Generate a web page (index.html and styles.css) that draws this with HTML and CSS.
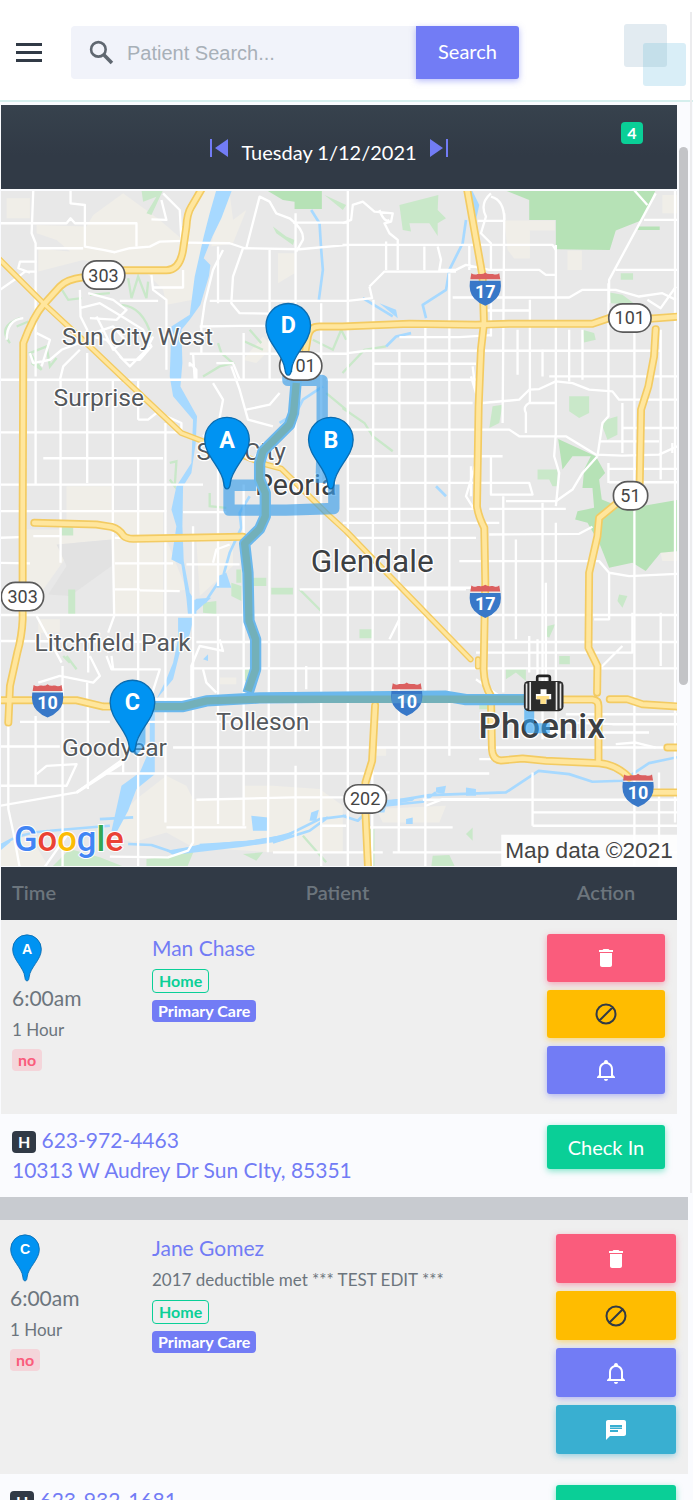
FILE: index.html
```html
<!DOCTYPE html>
<html lang="en">
<head>
  <meta charset="UTF-8">
  <meta name="viewport" content="width=device-width, initial-scale=1.0">
  <title>Patient Schedule</title>
  <link rel="stylesheet" href="styles.css">
</head>
<body>
  <!-- shared shapes -->
  <svg class="defs" width="0" height="0" aria-hidden="true">
    <symbol id="pin" viewBox="-70 -70 140 222" overflow="visible">
      <path d="M0 148C-7 148-9 140-10 130C-14 85-67 50-67 0A67 67 0 0 1 67 0C67 50 14 85 10 130C9 140 7 148 0 148Z" fill="#0093f2" stroke="#0a6cb0" stroke-width="4"/>
    </symbol>
    <symbol id="shield" viewBox="0 0 94 104" overflow="visible">
      <path d="M5 2Q15 9 24 4L30 4Q40 6 47 0Q54 6 64 4L70 4Q80 9 89 2L92 20H2Z" fill="#db5f5f"/>
      <path d="M1 25H93Q98 60 80 78Q66 93 47 100Q28 93 14 78Q-4 60 1 25Z" fill="#3878c8"/>
    </symbol>
    <symbol id="trash" viewBox="0 0 24 24"><path d="M6 19c0 1.100.9 2 2 2h8c1.100 0 2-.9 2-2V7H6v12z" fill="#fff"/><path d="M19 4h-3.500l-1-1h-5l-1 1H5v2h14V4z" fill="#fff"/></symbol>
    <symbol id="ban" viewBox="0 0 24 24"><path d="M12 2.500a9.500 9.500 0 1 0 0 19a9.500 9.500 0 0 0 0-19ZM5.500 18.500L18.500 5.500" fill="none" stroke="#313a46" stroke-width="2"/></symbol>
    <symbol id="bell" viewBox="0 0 24 24"><path d="M10 21h4c0 1.100-.9 2-2 2s-2-.9-2-2zM21 19v1H3v-1l2-2v-6c0-3.100 2.030-5.830 5-6.710V4a2 2 0 0 1 4 0v.29c2.970.88 5 3.610 5 6.710v6l2 2zm-4-8a5 5 0 0 0-10 0v7h10v-7z" fill="#fff"/></symbol>
    <symbol id="message" viewBox="0 0 24 24"><path d="M20 2H4c-1.100 0-2 .9-2 2v18l4-4h14c1.100 0 2-.9 2-2V4c0-1.100-.9-2-2-2zM6 7h12v2H6V7zm8 7H6v-2h8v2zm4-3H6V9.500h12V11z" fill="#fff" fill-rule="evenodd"/></symbol>
  </svg>

  <header class="topbar">
    <button class="menu" type="button" aria-label="Menu"><span></span><span></span><span></span></button>
    <form class="search">
      <svg class="search-icon" viewBox="0 0 24 24" aria-hidden="true"><circle cx="9" cy="9" r="7" fill="none" stroke="#5f6770" stroke-width="2.500"/><path d="M14 14l8 8" stroke="#5f6770" stroke-width="3.500"/></svg>
      <input type="text" id="patientSearch" aria-label="Patient Search" placeholder="Patient Search...">
      <button type="submit">Search</button>
    </form>
    <svg class="brand" viewBox="0 0 62 62" aria-hidden="true">
      <rect width="43" height="43" rx="3" fill="#e2ebf1"/>
      <rect x="19" y="19" width="43" height="43" rx="3" fill="#d9eef7"/>
      <path d="M22 19H43V40a3 3 0 0 1-3 3H19V22a3 3 0 0 1 3-3Z" fill="#c4dfea"/>
    </svg>
  </header>

  <main>
    <section class="card">
      <div class="datebar">
        <div class="datenav">
          <button type="button" aria-label="Previous day"><svg viewBox="0 0 18 18"><path d="M0 0h2v18H0zM18 0v18L5 9z" fill="#727cf5"/></svg></button>
          <span>Tuesday 1/12/2021</span>
          <button type="button" aria-label="Next day"><svg viewBox="0 0 18 18"><path d="M16 0h2v18h-2zM0 0v18l13-9z" fill="#727cf5"/></svg></button>
        </div>
        <span class="badge green count">4</span>
      </div>

      <svg class="map" viewBox="3 3 2031 2028" role="img" aria-label="Route map">
        <rect width="2040" height="2040" fill="#e8e8e8"/>
        <!-- open land -->
        <g fill="#f0eee8">
          <path d="M20 25H90V85H20ZM110 105L260 110L280 75L370 10L480 90L550 150L590 0H655L580 330L500 345L490 300L430 240L250 210L115 245V170L160 180L210 185L170 150L110 130Z"/>
          <path d="M635 170L700 160L740 60L700 90L690 10L640 140ZM835 190H885V250L835 280ZM730 510L790 440L820 470L770 520Z"/>
          <path d="M200 890H335V965H490V1280L345 1275L340 1050L230 1060L130 1200L75 1200V1020H200ZM500 1050L560 1200L500 1210ZM590 1050H700V1130L600 1220ZM115 1290H180V1330H115Z"/>
          <path d="M500 1760L560 1790L580 1830H730V1790H820L960 1800L1030 1850V1990L820 1990L580 1975L500 1930L400 1960L330 1940L370 1870L410 1830ZM0 1960L90 1940L150 2040H0Z"/>
          <path d="M1515 92H1667V122H1592V206H1545L1525 180ZM1705 182H1748V240H1705ZM1990 15H2040V70H1990ZM1980 1070H2040V1115H1990Z"/>
          <path d="M1130 1860L1340 1850L1320 1900H1150ZM660 1465H710V1485H660ZM1120 1675H1160V1700H1130Z"/>
        </g>
        <path d="M170 1065L335 1050V1130L210 1220L145 1215L200 1130Z" fill="#e2e2e2"/>
        <!-- parks -->
        <g fill="#b6e2b6">
          <path d="M885 0H967V57H885V35L850 30L800 0ZM1590 0H1970L1930 90L1850 122L1832 180L1670 178V90H1590V30L1515 0ZM1920 110H1982V120H1915Z"/>
          <path d="M1677 748L1790 800L1818 850L1800 870L1808 930L1845 945L1900 955L2040 930V1085L1985 1090L1940 1145L1900 1120L1830 1135L1800 1060L1765 1000L1728 990L1735 965L1785 955L1780 895L1750 895L1755 840L1775 800L1720 800L1690 840Z"/>
        </g>
        <g fill="#c9e8c9">
          <path d="M425 0H490L455 75L440 70L470 20L430 35ZM820 110L860 140L885 150L880 165L830 130ZM975 15L1040 45L1030 60ZM1200 45L1317 15L1315 60L1340 85L1315 100V138L1290 100H1230L1235 125L1210 120Z"/>
          <path d="M1865 250H1902V270H1865ZM1832 308L1870 315L1910 345L1835 340ZM1750 420L1785 430L1790 450L1755 458ZM1480 650L1510 645L1500 700L1470 715ZM1710 620H1770V670L1740 685L1710 665ZM1820 690L1855 680V735L1825 750L1810 710ZM1615 840H1675V890H1660L1650 870H1615Z"/>
          <path d="M185 1010H220V1038H185ZM205 1200H226V1275H205ZM710 1140H725V1180H710ZM695 1180L725 1190V1235L695 1220ZM760 1165H800V1190H760ZM815 1195H880V1215H815ZM610 1240L650 1235V1275L610 1270ZM735 1440H755V1475H735Z"/>
          <path d="M1080 1320H1118V1347H1080ZM1860 1215L1885 1220L1870 1255L1855 1235ZM1645 1310L1668 1305L1650 1345L1640 1340ZM1520 1440L1580 1440V1475L1550 1450L1520 1470ZM1680 1400H1712V1425H1680ZM1440 1540H1475V1560H1440ZM150 2040L210 1980L300 2005L390 2040ZM440 2010L520 2000L585 1980L560 2040H440ZM1110 1920H1125V2040H1112ZM1400 1935L1420 1915V1955ZM1300 2000L1350 1998L1370 2040H1295ZM730 1995L790 1990L770 2015Z"/>
        </g>
        <g fill="none" stroke="#c9e8c9" stroke-width="7">
          <path d="M30 460Q-10 410 60 385M50 410L85 395M95 520L125 540L90 490L140 470L150 530L170 505M180 290L205 330L245 325M270 315L330 310M385 265L395 325L415 260L440 325L445 275M365 345Q430 350 455 440M735 455L790 480M750 420L785 460M940 450L1000 480L1025 420L1040 450M610 560L660 530L700 520L665 490L655 460M980 610L1040 660M1029 550L1095 480L1160 470M1029 655L1095 700L1120 740L1180 785M510 820L530 815L525 890L510 870M630 910V950L680 955M200 1400L230 1440M190 1400L210 1420M910 1940L980 2020M900 1200L965 1265"/>
        </g>
        <!-- water -->
        <g fill="#a7d9ff">
          <path d="M650 0H697L665 85L638 140L612 205L632 225L628 258L602 345L570 390L545 420L548 520L542 590L592 680L588 760L575 850L550 890L548 1010L552 1115L570 1210L590 1240L565 1278L560 1225L545 1125L515 1110L530 1010L515 960L530 890L575 820L580 690L520 620L510 560L515 410L570 375L585 260L612 140L630 70Z"/>
          <path d="M565 1250L590 1228L635 1225L590 1265V1280H565ZM535 1285H582L570 1335L540 1390L520 1470L470 1530L500 1470L520 1420L535 1350ZM450 1545H465V1755L410 1800L385 1865L350 1930L335 1925L365 1790L420 1750L450 1680ZM655 1160L680 1150L695 1195L650 1195ZM755 1880L805 1885V1925H760ZM935 1870L958 1862L950 1895H930ZM610 1410L625 1395V1415ZM1390 0H1418L1440 45L1430 90L1415 30ZM1140 340L1190 360L1195 385ZM1310 1795L1340 1790L1335 1815L1310 1810ZM1400 1795L1430 1800V1820H1400ZM1220 1890L1240 1885V1905H1220Z"/>
        </g>
        <g fill="none" stroke="#a7d9ff" stroke-width="8" stroke-linejoin="round">
          <path d="M615 1240L655 1180M672 1155L690 1090L725 1015L720 970L750 920M935 60L960 100L965 180L970 240L958 330M970 590L910 630L890 670L840 700M1400 90L1390 160L1350 240L1340 300L1270 345L1280 385M1235 430L1190 440L1160 470M1090 325L1180 380M1310 890L1340 920"/>
          <path d="M0 1970Q60 1930 150 1925L330 1910M300 1890L400 1885M0 1980L30 1955M385 1965L455 1968L520 1990L600 1970L680 1972M600 1968L740 1960L860 1940L960 1890L1040 1880M820 1960L930 1925L985 1885M1160 1840L1290 1818L1520 1810L1618 1745L1710 1755L1780 1778L1870 1775L1950 1722L2040 1703M1150 1850L1270 1838L1310 1810M1029 1880L1075 1895L1090 1880"/>
        </g>
        <path d="M500 1985Q640 1960 740 1955Q820 1950 900 1920L850 1955L720 1975L520 1998ZM1130 1835L1250 1825L1240 1835L1160 1850L1155 1870H1130Z" fill="#a7d9ff"/>
        <!-- local streets -->
        <g fill="none" stroke="#fff" stroke-width="7" stroke-linejoin="round">
          <path d="M100 0L95 130L107 160V560M107 570V885M182 570V1120M262 490V880M262 1480V1530M339 570V1050L343 1280L325 1330M415 570V690M415 805V2040M497 700V1900M580 1010V1960L565 1985L505 2005L330 2003M655 170V340M655 730V1190M655 1275V1905M732 430V570M732 885V1910M810 180V570M810 1070L805 1990M888 70V1675M888 1730V2040M965 340V2040"/>
          <path d="M1045 0V2040M1122 330L1118 2040M1200 480L1198 1990M1278 400V2040M1350 250V1700M1515 70L1510 700M1512 920V1510M1592 330V640M1630 940V1650M1670 165V730L1665 800L1680 850L1670 950M1670 1000V1600M1750 420V570M1828 280V680L1810 700L1795 800M1828 820V880M1906 430V2040M1985 420V870M1985 1270V1430M2028 0V1900M25 1550V1860L40 1930L60 2040M107 1580V1790M188 1430V2040M264 1550V1800"/>
          <path d="M0 100H200L212 85L225 100H410V170M0 570H860M980 570H1430M0 728H540M130 806H490M0 885H610M0 965H500M550 968H680M0 1045L60 1043M100 1040H180M0 1120L90 1122M345 1045H700M345 1122H520M560 1125H720M345 1200H420M420 1203L540 1205M0 1277H2040M0 1355L530 1358M590 1358H2040M580 1437H2040M60 1598L330 1598M440 1598H1460M0 1672H180M520 1675H2040M320 1753H1470M590 1832L880 1825H1140M1270 1832H2040M500 1915H740M1110 1915H1360M1600 1910H2040M820 1990H1150M965 1910H1040M1180 1990H2040"/>
          <path d="M560 158L690 160L735 175L900 178L1045 165M1029 165H1660L1670 180M880 98H1045M740 175L780 20L810 35L830 70L870 85Q915 120 910 150L890 185M630 333H1045M600 410L720 408H860M570 492H1045M730 175L700 260L695 340L720 370L860 372M670 180L640 240L615 340L605 410V492M1045 490L1100 483H1985M1120 522H1430M1200 442H1380L1475 436M1045 640H1420M1450 640L1560 630L1590 600L1620 598L1670 575L1720 580L1770 600L1840 605L1860 630H2040M1045 720H1530L1560 740H1700L1790 795L1870 798L1980 795L2040 768M1045 800H1510M1045 880H1590L1600 915H1475V800M1520 935H1670L1720 900L1750 850L1795 800M1045 958H1430M1470 958H1700M1030 1000H1500M1470 1035L1740 1033L1780 1012M1380 1115H1800L1830 1150L1890 1160L2040 1153M1045 1045H1430M1045 1195H1500M900 1200H1400"/>
          <path d="M0 300L50 265L75 245H110M110 215H60L55 235L90 248M105 175H250M212 0V40L255 45V170L310 180L345 187L390 175L450 170L480 155L550 153M485 30L500 90L455 88M490 10L540 60L545 150M455 255L460 300L500 330V540M360 333L475 333M460 293H550V240M240 300L242 380L262 420L255 470M240 355L300 340L375 385L430 420L455 470L420 510H370L320 450L275 440M270 385L350 390L380 360L340 330L265 310M20 450Q20 390 70 385M90 490L100 520L150 510L185 480L250 455M110 430L150 450L125 530M240 480L190 530L180 570M280 430L340 410L375 450L340 480L290 380M360 500L390 530L440 480L460 440"/>
          <path d="M720 570L700 520L650 520M695 530L720 600L745 690L820 710M740 660L810 645L840 610M640 580L670 630L655 710L610 740M580 490L585 570M370 575L500 680L545 700V730M415 690H445L470 670M570 530V520L590 540V570M1029 100L1055 90L1060 45L1090 35L1125 65L1180 70L1175 95L1155 100L1170 130L1195 150V240M1160 155V240M1140 60Q1155 100 1170 90M1275 170V240M1315 170L1325 210L1320 240L1370 240L1400 225L1470 240H1620L1640 255H1670M1110 290L1155 245H1370M1110 290L1118 325L1045 333M1360 323H1710L1750 300L1850 300L1920 320L1990 310L2031 330M1410 165V240M1435 93H1515M1475 20Q1515 30 1515 90M1475 10Q1440 40 1460 80L1445 130L1475 160V240M1460 362H1590M1475 330V440M1555 420V555M1630 480V560M1710 420V575M1650 560H2040M1590 640H1670M1590 640Q1570 650 1580 670V730"/>
          <path d="M1970 10L1830 270V340M1905 0L1945 45M1935 90H2040M1850 240H2040M1945 330L1985 355L2031 290M1420 530L1430 610L1415 560M1430 820L1400 920L1425 960M1415 830V920M1870 640V790M1870 715H2040M1800 755H1980M1830 838H2040M1830 878H2040M2020 760V790M1830 1150V1290H1785M1430 1390H1900V1270M1710 1600L1840 1605H2040M1700 1575H2040M1850 1665L1910 1660L1970 1675M1640 1630H1950M1590 1340V1450M1615 1350V1480M1640 1180V1480M1550 1050V1350M1430 1470L1500 1520M1170 1350L1200 1290M1600 1870H2040M1600 1750V1910M1980 1750V2040M1280 1850L1330 1830H1470M1170 1810H1130M920 1430V1500M610 1440L620 1480L650 1510M575 1520V1430L600 1370L670 1385L660 1350M640 1120L650 1080L690 1065M320 1400L335 1440H480L455 1520M270 1400L300 1460L280 1480L180 1460L115 1480M325 1390V1340M265 1380V1450M110 1280L185 1420M110 1755L140 1730L230 1725L200 1790H0M0 1850L230 1810L370 1710V1750M130 2040L200 1940M335 1400L340 1440M1440 1710H1475M1870 1370L1800 1440"/>
        </g>
        <path d="M370 1720L230 1810M465 1530H720" stroke="#fff" stroke-width="9" fill="none"/>

        <!-- highways: casing, then fill -->
        <g fill="none" stroke-linecap="round" stroke-linejoin="round">
          <g stroke="#f3cb62" stroke-width="24">
            <path d="M610 -10L575 50Q562 70 560 110L550 180Q540 241 500 241H375L250 262Q200 268 180 290L130 345Q100 380 70 460L68 1020V1290Q66 1340 52 1390L30 1490L25 1600"/>
            <path d="M-10 200L130 340L270 470L375 570L545 730L610 755L800 825L845 837L980 970L1040 1025L1414 1410M1436 1410V1432" stroke-width="18"/>
            <path d="M103 1000L290 1005L335 1012Q360 1020 370 1038Q380 1048 400 1048L730 1042M-10 1533H230L310 1552H340"/>
            <path d="M915 500L925 440Q930 410 960 410H1029L1230 402L1430 405L1530 402H1780L1830 385L1950 387L2040 380"/>
            <path d="M1402 -10L1450 260L1454 400L1445 480L1438 650L1433 950Q1437 980 1455 1015L1458 1180L1453 1440Q1455 1490 1475 1520L1478 1680Q1480 1712 1505 1714L1570 1708L1640 1715L1800 1722Q1850 1725 1890 1765M1920 1810H2040"/>
            <path d="M1690 1531H1780Q1798 1533 1798 1550V1715M1970 418L1965 500L1948 590L1926 660L1922 880M1855 940L1800 985L1795 1040L1770 1150L1768 1375L1795 1430L1794 1510M1832 1530L1885 1530L1930 1545L2040 1552M2005 1675H2040"/>
            <path d="M1127 1548L1118 1715L1098 1780V1870L1106 2040"/>
          </g>
          <g stroke="#ffe69d" stroke-width="14">
            <path d="M610 -10L575 50Q562 70 560 110L550 180Q540 241 500 241H375L250 262Q200 268 180 290L130 345Q100 380 70 460L68 1020V1290Q66 1340 52 1390L30 1490L25 1600"/>
            <path d="M-10 200L130 340L270 470L375 570L545 730L610 755L800 825L845 837L980 970L1040 1025L1414 1410M1436 1410V1432" stroke-width="10"/>
            <path d="M103 1000L290 1005L335 1012Q360 1020 370 1038Q380 1048 400 1048L730 1042M-10 1533H230L310 1552H340"/>
            <path d="M915 500L925 440Q930 410 960 410H1029L1230 402L1430 405L1530 402H1780L1830 385L1950 387L2040 380"/>
            <path d="M1402 -10L1450 260L1454 400L1445 480L1438 650L1433 950Q1437 980 1455 1015L1458 1180L1453 1440Q1455 1490 1475 1520L1478 1680Q1480 1712 1505 1714L1570 1708L1640 1715L1800 1722Q1850 1725 1890 1765M1920 1810H2040"/>
            <path d="M1690 1531H1780Q1798 1533 1798 1550V1715M1970 418L1965 500L1948 590L1926 660L1922 880M1855 940L1800 985L1795 1040L1770 1150L1768 1375L1795 1430L1794 1510M1832 1530L1885 1530L1930 1545L2040 1552M2005 1675H2040"/>
            <path d="M1127 1548L1118 1715L1098 1780V1870L1106 2040"/>
          </g>
        </g>

        <!-- place names -->
        <g class="place">
          <text x="186" y="466">Sun City West</text>
          <text x="161" y="648">Surprise</text>
          <text x="590" y="812">Sun City</text>
          <text x="104" y="1386">Litchfield Park</text>
          <text x="650" y="1622">Tolleson</text>
          <text x="186" y="1700">Goodyear</text>
          <text class="town" x="766" y="917">Peoria</text>
          <text class="city" x="934" y="1147">Glendale</text>
          <text class="capital" x="1438" y="1645">Phoenix</text>
        </g>

        <!-- route -->
        <g fill="none" stroke-linejoin="round" stroke-linecap="butt">
          <path d="M865 552V572H968V740L965 880M1003 885V957L860 962H688V887H770" stroke="#3b9eea" stroke-opacity=".65" stroke-width="34"/>
          <path d="M890 572L882 670L870 705L790 785L780 820V870L797 910V980L780 1018L735 1062L745 1150L748 1295L768 1350V1440L745 1512M460 1552H550L620 1535L780 1526L1340 1521L1400 1531H1600" stroke="#6bb8ed" stroke-width="34"/>
          <path d="M890 580L882 670L870 705L790 785L780 820V870L797 910V980L780 1018L735 1062L745 1150L748 1295L768 1350V1440L745 1505M460 1552H550L620 1535L780 1530H1600" stroke="#73b0b9" stroke-width="22"/>
          <path d="M1590 1545V1617H1652M422 1600V1660L398 1690" stroke="#2fa5f8" stroke-opacity=".6" stroke-width="30"/>
        </g>

        <!-- route shields -->
        <g class="state">
          <rect x="248" y="213" width="127" height="85" rx="42"/><text x="311" y="275">303</text>
          <rect x="840" y="486" width="127" height="85" rx="42"/><text x="903" y="547">101</text>
          <rect x="1829" y="342" width="127" height="85" rx="42"/><text x="1892" y="404">101</text>
          <rect x="1843" y="876" width="103" height="85" rx="42"/><text x="1894" y="938">51</text>
          <rect x="4" y="1179" width="127" height="85" rx="42"/><text x="68" y="1241">303</text>
          <rect x="1034" y="1787" width="127" height="85" rx="42"/><text x="1097" y="1849">202</text>
        </g>
        <g class="interstate">
          <use href="#shield" x="1411" y="248" width="94" height="104"/><text x="1458" y="323">17</text>
          <use href="#shield" x="1411" y="1186" width="94" height="104"/><text x="1458" y="1261">17</text>
          <use href="#shield" x="96" y="1485" width="94" height="104"/><text x="143" y="1560">10</text>
          <use href="#shield" x="1175" y="1480" width="94" height="104"/>
          <rect x="1177" y="1514" width="90" height="28" fill="#5da5d2" opacity=".5"/><text x="1222" y="1555">10</text>
          <use href="#shield" x="1870" y="1754" width="94" height="104"/><text x="1917" y="1829">10</text>
        </g>

        <!-- stops -->
        <g class="stop">
          <use href="#pin" x="612" y="680" width="140" height="222"/><text x="682" y="774">A</text>
          <use href="#pin" x="924" y="680" width="140" height="222"/><text x="994" y="774">B</text>
          <use href="#pin" x="796" y="338" width="140" height="222"/><text x="866" y="431">D</text>
          <use href="#pin" x="328" y="1470" width="140" height="222"/><text x="398" y="1563">C</text>
        </g>
        <g>
          <path d="M1614 1480V1465Q1614 1460 1620 1460H1646Q1652 1460 1652 1465V1480" fill="none" stroke="#222" stroke-width="8"/>
          <rect x="1574" y="1475" width="119" height="91" rx="14" fill="#2b2b2b"/>
          <path d="M1582 1483V1558M1593 1478V1562M1672 1478V1562M1684 1483V1558" stroke="#e8e8e8" stroke-width="5"/>
          <path d="M1624 1500H1642V1514H1656V1530H1642V1544H1624V1530H1610V1514H1624Z" fill="#fff"/>
          <path d="M1612 1520H1650V1530H1640V1544H1624V1530H1612Z" fill="#ffe08a"/>
        </g>

        <text class="google" x="42" y="1985"><tspan fill="#4285f4">G</tspan><tspan fill="#ea4335">o</tspan><tspan fill="#fbbc05">o</tspan><tspan fill="#4285f4">g</tspan><tspan fill="#34a853">l</tspan><tspan fill="#ea4335">e</tspan></text>
        <rect x="1506" y="1937" width="534" height="103" fill="#fff" opacity=".9"/>
        <text class="credit" x="1518" y="2006">Map data ©2021</text>
      </svg>

      <table class="visits">
        <colgroup><col class="col-time"><col><col class="col-action"></colgroup>
        <thead>
          <tr><th scope="col">Time</th><th scope="col">Patient</th><th scope="col">Action</th></tr>
        </thead>
        <tbody>
          <tr class="visit">
            <td>
              <svg class="pin" viewBox="-70 -70 140 222" role="img" aria-label="Stop A"><use href="#pin" x="-70" y="-70" width="140" height="222"/><text x="0" y="22">A</text></svg>
              <div class="time">6:00am</div>
              <div class="note">1 Hour</div>
              <span class="badge no">no</span>
            </td>
            <td>
              <a class="name" href="#">Man Chase</a>
              <div class="tags"><span class="badge outline">Home</span><span class="badge purple">Primary Care</span></div>
            </td>
            <td class="actions">
              <button class="red" type="button" aria-label="Delete"><svg><use href="#trash"/></svg></button>
              <button class="yellow" type="button" aria-label="Block"><svg><use href="#ban"/></svg></button>
              <button class="purple" type="button" aria-label="Notify"><svg><use href="#bell"/></svg></button>
            </td>
          </tr>
          <tr class="contact">
            <td colspan="2">
              <span class="badge dark">H</span> <a href="#">623-972-4463</a><br>
              <a href="#">10313 W Audrey Dr Sun CIty, 85351</a>
            </td>
            <td><button class="green" type="button">Check In</button></td>
          </tr>
        </tbody>
      </table>
    </section>

    <div class="divider"></div>

    <section class="card wide">
      <table class="visits">
        <colgroup><col class="col-time"><col><col class="col-action"></colgroup>
        <tbody>
          <tr class="visit">
            <td>
              <svg class="pin" viewBox="-70 -70 140 222" role="img" aria-label="Stop C"><use href="#pin" x="-70" y="-70" width="140" height="222"/><text x="0" y="22">C</text></svg>
              <div class="time">6:00am</div>
              <div class="note">1 Hour</div>
              <span class="badge no">no</span>
            </td>
            <td>
              <a class="name" href="#">Jane Gomez</a>
              <div class="note">2017 deductible met *** TEST EDIT ***</div>
              <div class="tags"><span class="badge outline">Home</span><span class="badge purple">Primary Care</span></div>
            </td>
            <td class="actions">
              <button class="red" type="button" aria-label="Delete"><svg><use href="#trash"/></svg></button>
              <button class="yellow" type="button" aria-label="Block"><svg><use href="#ban"/></svg></button>
              <button class="purple" type="button" aria-label="Notify"><svg><use href="#bell"/></svg></button>
              <button class="blue" type="button" aria-label="Message"><svg><use href="#message"/></svg></button>
            </td>
          </tr>
          <tr class="contact">
            <td colspan="2"><span class="badge dark">H</span> <a href="#">623-932-1681</a></td>
            <td><button class="green" type="button">Check In</button></td>
          </tr>
        </tbody>
      </table>
    </section>
  </main>
  <div class="scroll-thumb"></div>
</body>
</html>
```
FILE: styles.css
```css
* {
  box-sizing: border-box;
}
body {
  position: relative;
  height: 100vh;
  margin: 0;
  overflow: hidden;
  background: #fafbfe;
  color: #6c757d;
  font-family: Lato, "Liberation Sans", sans-serif;
  font-size: 20px;
  line-height: 30px;
}
body::after {
  content: "";
  position: absolute;
  top: 12px;
  right: 1px;
  width: 2px;
  height: 1181px;
  background: #ececee;
}
button,
input {
  border: 0;
  font: inherit;
}
button {
  padding: 0;
  color: #fff;
  cursor: pointer;
}
a {
  color: #727cf5;
  text-decoration: none;
}
.defs {
  position: absolute;
}

/* top bar */
.topbar {
  display: flex;
  align-items: flex-start;
  height: 102px;
  padding: 24px 7px 0 16px;
  background: #fff;
  border-bottom: 2px solid #d5efed;
}
.menu {
  display: flex;
  flex-direction: column;
  gap: 5px;
  width: 26px;
  margin: 19px 29px 0 0;
  background: none;
}
.menu span {
  height: 3px;
  background: #313a46;
}
.search {
  display: flex;
  flex: 0 1 448px;
  height: 53px;
  margin-top: 2px;
  background: #f1f3fa;
  border-radius: 4px;
}
.search-icon {
  width: 25px;
  height: 25px;
  margin: 14px 13px 0 18px;
}
.search input {
  flex: 1;
  min-width: 0;
  padding: 0;
  background: none;
  font-family: "Liberation Sans", sans-serif;
  outline: none;
}
.search input::placeholder {
  color: #a8b0b8;
}
.search button {
  width: 103px;
  padding-bottom: 3px;
  background: #727cf5;
  border-radius: 0 3px 3px 0;
  box-shadow: 0 2px 6px rgba(114, 124, 245, .5);
}
.brand {
  width: 62px;
  height: 62px;
  margin-left: auto;
}

/* cards */
.card {
  margin: 3px 16px 0 1px;
}
.card.wide {
  margin: 0 5px 0 0;
}
.datebar {
  display: flex;
  align-items: center;
  height: 84px;
  padding: 0 34px 0 36px;
  background: linear-gradient(#37424d, #313a46 60%);
  color: #fff;
}
.datenav {
  display: flex;
  align-items: center;
  gap: 13px;
  margin: 10px auto 0;
}
.datenav button {
  width: 18px;
  height: 18px;
  margin-bottom: 8px;
  background: none;
}
.datenav svg {
  display: block;
}
.badge {
  display: inline-block;
  padding: 0 6px;
  border-radius: 4px;
  font-size: 16px;
  font-weight: bold;
  line-height: 22px;
}
.count {
  align-self: flex-start;
  width: 22px;
  margin-top: 17px;
  text-align: center;
}

/* map */
.map {
  display: block;
  width: 100%;
  height: auto;
  margin: 2px 0 1px;
}
.map text {
  font-family: Roboto, sans-serif;
}
.place text {
  fill: #54585c;
  stroke: #fff;
  stroke-width: 8px;
  stroke-linejoin: round;
  paint-order: stroke;
  font-size: 74px;
}
.place .town {
  fill: #3c4043;
  font-size: 86px;
}
.place .city {
  fill: #3c4043;
  font-size: 95px;
}
.place .capital {
  fill: #3c4043;
  font-size: 105px;
  font-weight: 500;
}
.state rect {
  fill: #fff;
  stroke: #5a5a5a;
  stroke-width: 5px;
}
.state text {
  fill: #444;
  font-size: 54px;
  text-anchor: middle;
}
.interstate text {
  fill: #fff;
  font-size: 54px;
  font-weight: bold;
  text-anchor: middle;
}
.stop text {
  fill: #fff;
  font-size: 70px;
  font-weight: bold;
  text-anchor: middle;
}
.map .google {
  font-size: 104px;
  font-weight: 500;
  stroke: #fff;
  stroke-width: 6px;
  paint-order: stroke;
}
.map .credit {
  fill: #444;
  font-family: "Liberation Sans", sans-serif;
  font-size: 68px;
}

/* visits */
.visits {
  width: 100%;
  table-layout: fixed;
  border-collapse: collapse;
}
.col-time {
  width: 139px;
}
.col-action {
  width: 142px;
}
.wide .col-time {
  width: 140px;
}
.wide .col-action {
  width: 144px;
}
th,
td {
  padding: 0 12px;
  vertical-align: top;
}
th {
  height: 53px;
  padding-bottom: 4px;
  background: #313a46;
  font-weight: 600;
  vertical-align: middle;
}
th:first-child,
td:first-child {
  padding-left: 11px;
  text-align: left;
}
.visit {
  background: #efefef;
}
.visit td {
  padding-top: 13px;
  padding-bottom: 12px;
}
.visit .actions {
  padding-top: 14px;
}
.wide td:first-child {
  padding-left: 10px;
}
.pin {
  display: block;
  width: 30px;
  height: 50px;
}
.pin text {
  fill: #fff;
  font: bold 66px "Liberation Sans", sans-serif;
  text-anchor: middle;
}
.time {
  font-size: 21px;
}
.note {
  font-size: 17px;
  line-height: 34px;
}
.name,
.contact a {
  font-size: 21px;
}
.name {
  display: block;
}
.tags {
  display: flex;
  flex-direction: column;
  align-items: flex-start;
  gap: 7px;
  margin-top: 6px;
}
.note + .tags {
  margin-top: 3px;
}
.visit .no {
  display: block;
  width: fit-content;
  margin-top: 2px;
  background: #f4d5da;
  color: #fa5c7c;
}
.outline {
  border: 1px solid #0acf97;
  color: #0acf97;
}
.visits button {
  display: block;
  width: 100%;
  height: 48px;
  margin-bottom: 8px;
  border-radius: 3px;
}
.visits button svg {
  display: block;
  width: 24px;
  height: 24px;
  margin: 0 auto;
}
.wide .actions button {
  height: 49px;
}
.contact td {
  padding-top: 11px;
  padding-bottom: 12px;
}
.visits .contact button {
  height: 44px;
  margin: 0;
}
.dark {
  background: #313a46;
  color: #fff;
}
.red {
  background: #fa5c7c;
  box-shadow: 0 2px 6px rgba(250, 92, 124, .5);
}
.yellow {
  background: #ffbc00;
  box-shadow: 0 2px 6px rgba(255, 188, 0, .5);
}
.purple {
  background: #727cf5;
  color: #fff;
}
button.purple {
  box-shadow: 0 2px 6px rgba(114, 124, 245, .5);
}
.blue {
  background: #39afd1;
  box-shadow: 0 2px 6px rgba(57, 175, 209, .5);
}
.green {
  background: #0acf97;
  color: #fff;
}
button.green {
  box-shadow: 0 2px 6px rgba(10, 207, 151, .5);
}
.divider {
  height: 23px;
  margin-right: 5px;
  background: #c8cbd0;
}
.scroll-thumb {
  position: absolute;
  top: 147px;
  right: 5px;
  width: 9px;
  height: 538px;
  border-radius: 5px;
  background: #c3c4c7;
}
```
